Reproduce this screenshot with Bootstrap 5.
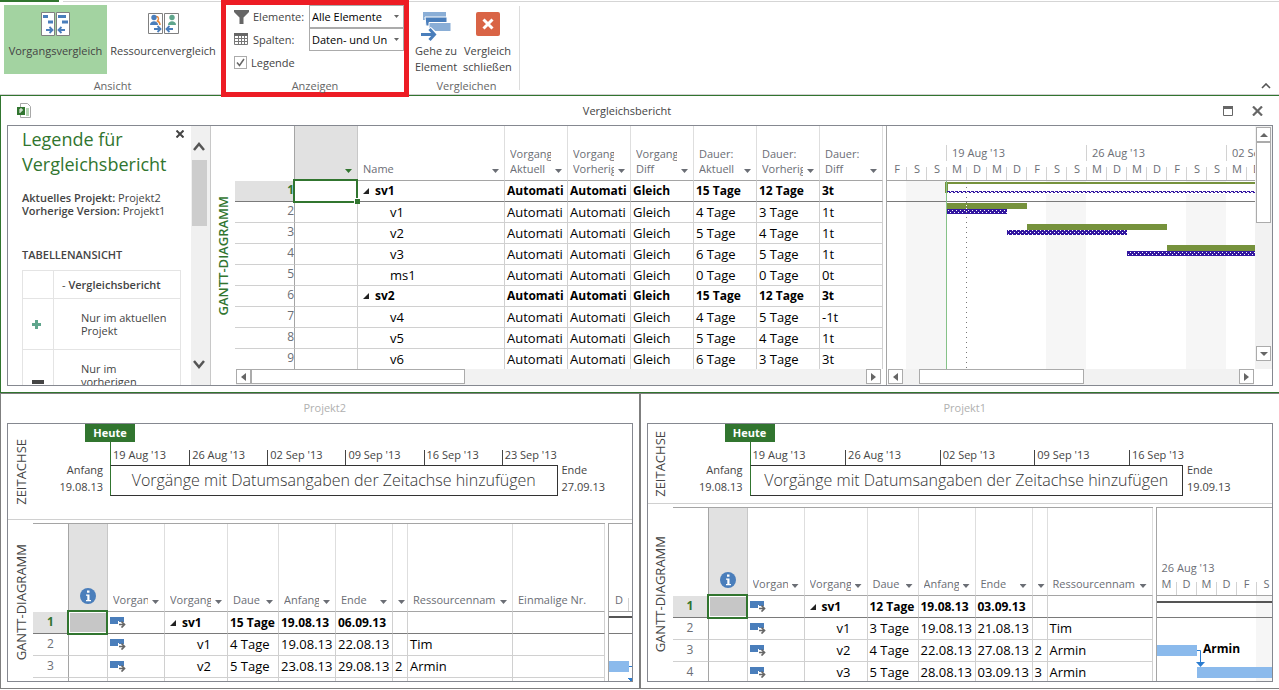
<!DOCTYPE html>
<html lang="de">
<head>
<meta charset="utf-8">
<meta name="viewport" content="width=device-width, initial-scale=1">
<title>Vergleichsbericht</title>
<link href="https://cdn.jsdelivr.net/npm/bootstrap@5.3.0/dist/css/bootstrap.min.css" rel="stylesheet">
<script src="https://cdn.jsdelivr.net/npm/bootstrap@5.3.0/dist/js/bootstrap.bundle.min.js" defer></script>
<style>
  :root { --pgreen: #31752f; --frame: #858890; --rule: #d0d0d0; --ink: #444; --muted: #6b6e75; }
  body { font-family: "Open Sans", "Noto Sans", sans-serif; font-size: 11px; line-height: 15px; color: var(--ink); background: #fff; }
  svg { display: block; flex: none; }
  button { font: inherit; color: inherit; background: none; border: 0; padding: 0; }
  .app { min-height: 100vh; height: 100vh; padding-bottom: 1px; }

  /* ribbon */
  .ribbon { height: 95px; border-bottom: 1px solid #d2d2d2; }
  .tabline { height: 2px; }
  .tab-file { width: 59px; background: var(--pgreen); }
  .tab-rule { height: 1px; margin-top: 1px; background: #d5d5d5; }
  .group-view { width: 221px; padding: 3px 0 0 4px; }
  .group-show { width: 188px; border: 5px solid #ed1c24; height: 97px; margin-top: -2px; z-index: 2; background: #fff; }
  .group-compare { width: 111px; padding: 3px 0 0 4px; }
  .group-compare::after { content: ""; position: absolute; right: 0; top: 4px; height: 84px; border-right: 1px solid #dcdcdc; }
  .caption { color: #666; }
  .rbtn { height: 69px; padding-top: 7px; display: flex; flex-direction: column; align-items: center; justify-content: flex-start; }
  .rbtn.active { background: #a3d3a1; }
  .rbtn span { display: block; line-height: 16px; margin-top: 7px; white-space: nowrap; text-align: center; }
  .show-row { height: 23px; }
  .combo { appearance: none; width: 95px; height: 23px; margin: 0; border: 1px solid #ababab; border-radius: 0; padding: 0 12px 0 2px; color: #000; font-size: 11px;
    background: #fff url("data:image/svg+xml,%3Csvg xmlns='http://www.w3.org/2000/svg' width='5' height='3'%3E%3Cpath d='M0 0h5L2.5 3z' fill='%23666'/%3E%3C/svg%3E") no-repeat right 4px center; }
  .tick { appearance: none; width: 13px; height: 13px; margin: 0; border: 1px solid #ababab;
    background: #fff url("data:image/svg+xml,%3Csvg xmlns='http://www.w3.org/2000/svg' width='11' height='11'%3E%3Cpath d='M2 5.5L4.5 8.5L9 2' fill='none' stroke='%23666' stroke-width='1.5'/%3E%3C/svg%3E") no-repeat center; }

  /* panes */
  .pane-report { flex: 1 1 0; min-height: 0; border: 1px solid var(--pgreen); border-right: 0; }
  .pane-pair { flex: 1 1 0; min-height: 0; }
  .pane { border: 1px solid #7f7f7f; min-width: 0; }
  .pane:last-child { border-right: 0; }
  .pane-title { height: 29px; padding-right: 4px; }
  .pane .pane-title { padding: 0 0 2px 10px; }
  .pane-title h2, .legend h2 { font-size: 11px; line-height: 15px; font-weight: 400; margin: 0; }
  .frame { border: 1px solid var(--frame); margin: 0 6px 6px; min-height: 0; overflow: hidden; }
  .side { width: 25px; }
  .side span { writing-mode: vertical-rl; transform: rotate(180deg); white-space: nowrap; font-size: 13px; line-height: 16px; }
  .side-main { width: 24px; color: var(--pgreen); }
  .side-main span { font-weight: 600; }

  /* legend */
  .legend { width: 183px; padding: 1px 10px 0 14px; overflow: hidden; }
  .legend h1 { font-size: 18px; line-height: 25px; font-weight: 400; color: var(--pgreen); margin: 0; }
  .legend .meta { line-height: 13px; margin: 14px 0 0; }
  .legend b { font-weight: 600; }
  .legend h2 { font-weight: 600; margin: 30px 0 8px; }
  .legend-close { top: 4px; right: 7px; }
  .legend-table { width: 159px; table-layout: fixed; border-collapse: collapse; line-height: 13px; }
  .legend-table td { border: 1px solid #e4e4e4; vertical-align: middle; padding: 12px 9px; }
  .legend-table td + td { padding-left: 27px; }
  .legend-table .lead-row td { padding: 7px 8px; }
  .vscroll-wide { width: 16px; background: #f0f0f0; padding: 16px 0; }
  .vthumb-wide { width: 15px; height: 66px; margin-top: 9px; background: #cdcdcd; }
  .legend-edge { width: 4px; background: #f0f0f0; border-right: 1px solid #c8c8c8; }

  /* data grids */
  .sheet { table-layout: fixed; border-collapse: separate; border-spacing: 0; color: #000; font-size: 13px; width: 1px; }
  .sheet th, .sheet td { padding: 0 0 0 2px; border-right: 1px solid var(--rule); border-bottom: 1px solid var(--rule); white-space: nowrap; overflow: hidden; line-height: 20px; height: 21px; }
  .sheet.tall td { line-height: 21px; height: 22px; }
  .sheet thead th { font-size: 11px; font-weight: 400; line-height: 15px; color: var(--muted); vertical-align: bottom; padding: 0 5px 4px; border-bottom-color: #a5a5a5; border-right-color: #dedede; }
  .sheet thead th.bare { border-color: transparent #a5a5a5 transparent transparent; }
  .sheet thead th.picked { background: #e1e1e1; border-right-color: #c8c8c8; }
  .sheet thead th.info { padding: 0 5px 7px 7px; }
  .sheet thead th.narrow { padding-left: 0; padding-right: 2px; }
  .sheet tbody th { font-weight: 400; font-size: 12px; color: var(--muted); border-right-color: #a5a5a5; padding: 0 0 2px; text-align: right; line-height: 18px; }
  .sheet.tall tbody th { text-align: center; height: 22px; }
  .sheet tbody .top td, .sheet tbody .top th { border-bottom-color: #7a7a7a; }
  .sheet tbody .top th { background: #e1e1e1; color: var(--pgreen); font-weight: 700; }
  .sheet .sum td { font-weight: 700; font-size: 12px; }
  .sheet td.cursor { position: relative; overflow: visible; padding: 0; }
  .sheet td.cursor::before { content: ""; position: absolute; inset: -2px -1px -2px -2px; border: 2px solid var(--pgreen); }
  .sheet td.grip::after { content: ""; position: absolute; right: -3px; bottom: -3px; width: 5px; height: 5px; background: var(--pgreen); border: 1px solid #fff; border-width: 1px 0 0 1px; box-sizing: content-box; }
  .sheet td.gray { background: #c6c6c6; box-shadow: inset 0 0 0 1px #fff; }
  .head-main { height: 55px; }
  .head-tall { height: 88px; }
  .sheet .lvl1 { padding-left: 32px; }
  .tri { display: inline-block; width: 0; height: 0; border-left: 6px solid transparent; border-bottom: 6px solid #222; margin: 0 6px 1px 3px; }
  .drop { width: 7px; height: 4px; flex: none; margin-bottom: 3px; background: currentColor; clip-path: polygon(0 0, 100% 0, 50% 100%); }
  .picked .drop { color: var(--pgreen); }
  .clip { overflow: hidden; margin-right: 4px; }
  .gap-edge { width: 4px; border-right: 1px solid #a5a5a5; flex: none; }

  /* scrollbars */
  .hbar { height: 16px; background: #f2f2f2; flex: none; margin: 0 2px 0 1px; }
  .hbar-chart { margin-right: 18px; }
  .sbtn, .sthumb { border: 1px solid #ababab; background: #fff; flex: none; }
  .sbtn { width: 15px; height: 15px; display: flex; align-items: center; justify-content: center; }
  .sthumb { height: 15px; }
  .vbar { width: 17px; background: #f2f2f2; padding: 1px 1px 8px; }

  /* gantt */
  .scale { border-bottom: 1px solid #a5a5a5; color: var(--muted); overflow: hidden; flex: none; }
  .weeks, .days { display: flex; white-space: nowrap; }
  .week { flex: 0 0 140px; border-left: 1px solid #d2d2d2; padding-left: 5px; height: 16px; }
  .day { flex: 0 0 20px; height: 19px; text-align: center; background: linear-gradient(#d2d2d2, #d2d2d2) no-repeat right bottom / 1px 13px; }

  /* timeline */
  .timeline { border-bottom: 1px solid var(--rule); flex: none; }
  .tl-date { color: var(--ink); line-height: 17px; padding-top: 37px; white-space: nowrap; }
  .tl-start { width: 77px; padding-right: 7px; }
  .today { width: 50px; height: 18px; margin-left: -25px; background: var(--pgreen); color: #fff; font-weight: 700; line-height: 18px; text-align: center; }
  .tl-weeks { height: 23px; display: flex; border-left: 1px solid var(--pgreen); white-space: nowrap; padding-top: 8px; }
  .tl-weeks span { flex: none; border-left: 1px solid #444; padding-left: 2px; line-height: 9px; }
  .tl-weeks span:first-child { border-left: 0; }
  .tl-box { height: 31px; border: 1px solid #333; border-left-color: var(--pgreen); font-size: 16px; font-weight: 300; line-height: 28px; text-align: center; white-space: nowrap; color: #333; }
</style>
</head>
<body>
<svg class="d-none" aria-hidden="true">
  <symbol id="task" viewBox="0 0 16 11"><path d="M0 0h14v7H0z" fill="#4a7ebb"/><path d="M8 4h8v7H8z" fill="#fff"/><path d="M9 3h5v2H9z" fill="#4a7ebb"/><path d="M9 7.500h5M11.500 4.500l3 3-3 3" fill="none" stroke="#666" stroke-width="1.700"/></symbol>
  <symbol id="info" viewBox="0 0 16 16"><circle cx="8" cy="8" r="8" fill="#4a7ebb"/><path d="M7 2.500h2.500v2.200H7zM6 6.500h3.500v5.500H11v1.300H6V12h1.300V7.800H6z" fill="#fff"/></symbol>
  <symbol id="al" viewBox="0 0 5 8"><path d="M5 0v8L0 4z" fill="#666"/></symbol>
  <symbol id="ar" viewBox="0 0 5 8"><path d="M0 0v8l5-4z" fill="#666"/></symbol>
</svg>

<div class="app d-flex flex-column overflow-hidden">
  <header class="ribbon flex-shrink-0">
    <div class="tabline d-flex"><div class="tab-file"></div><div class="ms-1 flex-grow-1 tab-rule"></div></div>
    <div class="d-flex">
      <section class="group-view">
        <div class="d-flex">
          <button class="rbtn active" type="button" style="width:103px">
            <svg width="29" height="24"><path d="M.5.500h13v23H.5zM15.500.500h13v23h-13z" fill="#fff" stroke="#808080"/><path d="M2 3h5v3H2zM7 8.500h5v3H7zM17 3h8v3h-8zM21 8.500h6v3h-6z" fill="#4a7ebb"/><path d="M5 18h6M8.500 15l3 3-3 3M24 18h-6M20.500 15l-3 3 3 3" fill="none" stroke="#4a7ebb" stroke-width="1.800"/></svg>
            <span>Vorgangsvergleich</span>
          </button>
          <button class="rbtn" type="button" style="width:112px">
            <svg width="31" height="24" viewBox="0 -1 31 24"><path d="M.5.500h14v20H.5zM16.500.500h14v20h-14z" fill="#fff" stroke="#808080"/><path d="M8 3.500c3 0 3 3 1.500 4.500 2 1 2.500 2 2.500 4" fill="none" stroke="#e8883a" stroke-width="1.500"/><circle cx="6" cy="4.500" r="2.700" fill="#4a7ebb"/><path d="M2 12c0-5 8-5 8 0z" fill="#4a7ebb"/><circle cx="24" cy="4.500" r="2.700" fill="#5fa58c"/><path d="M20 12c0-5 8-5 8 0z" fill="#5fa58c"/><path d="M6 16h6M9.500 13l3 3-3 3M25 16h-6M21.500 13l-3 3 3 3" fill="none" stroke="#4a7ebb" stroke-width="1.800"/></svg>
            <span>Ressourcenvergleich</span>
          </button>
        </div>
        <div class="caption text-center mt-1">Ansicht</div>
      </section>
      <section class="group-show position-relative">
        <div class="show-row d-flex align-items-center ps-2">
          <svg width="15" height="14"><path d="M0 0h15v2L9.500 7.500V14h-4V7.500L0 2z" fill="#666"/></svg>
          <label class="ps-1 flex-grow-1" for="cb-el">Elemente:</label>
          <select id="cb-el" class="combo"><option>Alle Elemente</option></select>
        </div>
        <div class="show-row d-flex align-items-center ps-2">
          <svg width="15" height="13"><path d="M.5.500h13v11H.5zM.5 5.500h13M.5 8.500h13M4.500 3v8.500M7.500 3v8.500M10.500 3v8.500" fill="none" stroke="#777"/><path d="M0 0h14v3H0z" fill="#666"/></svg>
          <label class="ps-1 flex-grow-1" for="cb-sp">Spalten:</label>
          <select id="cb-sp" class="combo"><option>Daten- und Un</option></select>
        </div>
        <div class="show-row d-flex align-items-center ps-2">
          <input class="tick" type="checkbox" id="ck-leg" checked>
          <label class="ps-1" for="ck-leg">Legende</label>
        </div>
        <div class="caption text-center mt-1">Anzeigen</div>
      </section>
      <section class="group-compare position-relative">
        <div class="d-flex">
          <button class="rbtn" type="button" style="width:46px">
            <svg width="30" height="31"><path d="M2 0h23v8H2z" fill="#8aaed6"/><path d="M4 5h22v9H5z" fill="#4a7ebb" stroke="#fff"/><path d="M8 10.500h22v9H8z" fill="#8aaed6" stroke="#fff"/><path d="M-1 22.500h14M8 16.500l6.500 6-6.500 6" fill="none" stroke="#fff" stroke-width="5"/><path d="M0 22.500h12M8.500 17l5 5.500-5 5.500" fill="none" stroke="#4a7ebb" stroke-width="3"/></svg>
            <span class="mt-0">Gehe zu<br>Element</span>
          </button>
          <button class="rbtn" type="button" style="width:57px">
            <svg width="24" height="31"><rect width="24" height="24" rx="2" fill="#d96446"/><path d="M7.500 7.500l9 9M16.500 7.500l-9 9" stroke="#fff" stroke-width="3"/></svg>
            <span class="mt-0">Vergleich<br>schließen</span>
          </button>
        </div>
        <div class="caption text-center mt-1">Vergleichen</div>
      </section>
      <button class="ms-auto align-self-end mb-2 me-2" type="button" aria-label="Menüband reduzieren"><svg width="10" height="6"><path d="M1 5l4-4 4 4" fill="none" stroke="#555" stroke-width="1.600"/></svg></button>
    </div>
  </header>

  <main class="pane-report d-flex flex-column">
    <div class="pane-title d-flex align-items-center flex-shrink-0">
      <svg class="ms-3" width="14" height="15"><path d="M3.500 4V.500h7l3 3v11h-10V12" fill="#fff" stroke="#a8a8a8"/><path d="M0 4h8v8H0z" fill="#31752f"/><path d="M3 10V6h2v2H3" fill="none" stroke="#fff"/><path d="M9 6h3M9 8h3M9 10h3M9 12h3" stroke="#6cae6a"/></svg>
      <h2 class="flex-grow-1 text-center">Vergleichsbericht</h2>
      <button type="button" class="me-3" aria-label="Maximieren"><svg width="13" height="10"><path d="M.5.500h9v9H.5z" fill="none" stroke="#666"/><path d="M0 0h10v3H0z" fill="#666"/></svg></button>
      <button type="button" class="me-2" aria-label="Schließen"><svg width="15" height="10"><path d="M1 .500l9 9M10 .500l-9 9" stroke="#666" stroke-width="2.200"/></svg></button>
    </div>
    <div class="frame d-flex flex-grow-1">
      <aside class="legend position-relative flex-shrink-0">
        <button type="button" class="legend-close position-absolute" aria-label="Legende schließen"><svg width="8" height="8"><path d="M.5.500l7 7M7.500.500l-7 7" stroke="#444" stroke-width="2"/></svg></button>
        <h1>Legende für<br>Vergleichsbericht</h1>
        <p class="meta text-nowrap"><b>Aktuelles Projekt:</b> Projekt2<br><b>Vorherige Version:</b> Projekt1</p>
        <h2>TABELLENANSICHT</h2>
        <table class="legend-table">
          <colgroup><col style="width:31px"><col></colgroup>
          <tr class="lead-row"><td></td><td class="text-nowrap ps-2">- <b>Vergleichsbericht</b></td></tr>
          <tr><td><svg width="9" height="9"><path d="M3 0h3v3h3v3H6v3H3V6H0V3h3z" fill="#5fa58c"/></svg></td><td class="pe-0 text-nowrap">Nur im aktuellen<br>Projekt</td></tr>
          <tr><td><svg width="12" height="4"><path d="M0 0h12v4H0z" fill="#444"/></svg></td><td>Nur im vorherigen Projekt</td></tr>
        </table>
      </aside>
      <div class="vscroll-wide d-flex flex-column align-items-center flex-shrink-0">
        <svg width="12" height="9"><path d="M1 8l5-6 5 6" fill="none" stroke="#555" stroke-width="2.500"/></svg>
        <div class="vthumb-wide"></div>
        <svg class="mt-auto" width="12" height="9"><path d="M1 1l5 6 5-6" fill="none" stroke="#555" stroke-width="2.500"/></svg>
      </div>
      <div class="legend-edge flex-shrink-0"></div>
      <div class="side side-main d-flex align-items-center justify-content-center flex-shrink-0"><span>GANTT-DIAGRAMM</span></div>

      <div class="d-flex flex-column flex-shrink-0">
        <div class="flex-grow-1 overflow-hidden" style="min-height:0">
          <table class="sheet">
            <colgroup><col style="width:60px"><col style="width:63px"><col style="width:147px"><col style="width:63px"><col style="width:63px"><col style="width:63px"><col style="width:63px"><col style="width:63px"><col style="width:63px"></colgroup>
            <thead><tr class="head-main">
              <th class="bare"></th>
              <th class="picked"><div class="d-flex justify-content-end"><i class="drop"></i></div></th>
              <th><div class="d-flex align-items-end justify-content-between"><span class="clip">Name</span><i class="drop"></i></div></th>
              <th><div class="d-flex align-items-end justify-content-between"><span class="clip">Vorgang<br>Aktuell</span><i class="drop"></i></div></th>
              <th><div class="d-flex align-items-end justify-content-between"><span class="clip">Vorgang<br>Vorherig</span><i class="drop"></i></div></th>
              <th><div class="d-flex align-items-end justify-content-between"><span class="clip">Vorgang<br>Diff</span><i class="drop"></i></div></th>
              <th><div class="d-flex align-items-end justify-content-between"><span class="clip">Dauer:<br>Aktuell</span><i class="drop"></i></div></th>
              <th><div class="d-flex align-items-end justify-content-between"><span class="clip">Dauer:<br>Vorherig</span><i class="drop"></i></div></th>
              <th><div class="d-flex align-items-end justify-content-between"><span class="clip">Dauer:<br>Diff</span><i class="drop"></i></div></th>
            </tr></thead>
            <tbody>
              <tr class="top sum"><th>1</th><td class="cursor grip"></td><td><i class="tri"></i>sv1</td><td>Automati</td><td>Automati</td><td>Gleich</td><td>15 Tage</td><td>12 Tage</td><td>3t</td></tr>
              <tr><th>2</th><td></td><td class="lvl1">v1</td><td>Automati</td><td>Automati</td><td>Gleich</td><td>4 Tage</td><td>3 Tage</td><td>1t</td></tr>
              <tr><th>3</th><td></td><td class="lvl1">v2</td><td>Automati</td><td>Automati</td><td>Gleich</td><td>5 Tage</td><td>4 Tage</td><td>1t</td></tr>
              <tr><th>4</th><td></td><td class="lvl1">v3</td><td>Automati</td><td>Automati</td><td>Gleich</td><td>6 Tage</td><td>5 Tage</td><td>1t</td></tr>
              <tr><th>5</th><td></td><td class="lvl1">ms1</td><td>Automati</td><td>Automati</td><td>Gleich</td><td>0 Tage</td><td>0 Tage</td><td>0t</td></tr>
              <tr class="sum"><th>6</th><td></td><td><i class="tri"></i>sv2</td><td>Automati</td><td>Automati</td><td>Gleich</td><td>15 Tage</td><td>12 Tage</td><td>3t</td></tr>
              <tr><th>7</th><td></td><td class="lvl1">v4</td><td>Automati</td><td>Automati</td><td>Gleich</td><td>4 Tage</td><td>5 Tage</td><td>-1t</td></tr>
              <tr><th>8</th><td></td><td class="lvl1">v5</td><td>Automati</td><td>Automati</td><td>Gleich</td><td>5 Tage</td><td>4 Tage</td><td>1t</td></tr>
              <tr><th>9</th><td></td><td class="lvl1">v6</td><td>Automati</td><td>Automati</td><td>Gleich</td><td>6 Tage</td><td>3 Tage</td><td>3t</td></tr>
            </tbody>
          </table>
        </div>
        <div class="hbar d-flex"><div class="sbtn"><svg width="5" height="8"><use href="#al"/></svg></div><div class="sthumb" style="width:214px"></div><div class="sbtn ms-auto"><svg width="5" height="8"><use href="#ar"/></svg></div></div>
      </div>
      <div class="gap-edge"></div>
      <div class="d-flex flex-column flex-grow-1" style="min-width:0">
        <div class="d-flex flex-grow-1" style="min-height:0">
          <div class="d-flex flex-column flex-grow-1 overflow-hidden" style="min-width:0">
            <div class="scale head-main d-flex flex-column justify-content-end">
              <div class="weeks"><div style="flex:0 0 59px"></div><div class="week">19 Aug '13</div><div class="week">26 Aug '13</div><div class="week">02 Sep '13</div></div>
              <div class="days"><div class="day">F</div><div class="day">S</div><div class="day">S</div><div class="day">M</div><div class="day">D</div><div class="day">M</div><div class="day">D</div><div class="day">F</div><div class="day">S</div><div class="day">S</div><div class="day">M</div><div class="day">D</div><div class="day">M</div><div class="day">D</div><div class="day">F</div><div class="day">S</div><div class="day">S</div><div class="day">M</div><div class="day">D</div></div>
            </div>
            <svg class="w-100" height="190" shape-rendering="crispEdges">
              <defs><pattern id="dots" width="4" height="4" patternUnits="userSpaceOnUse"><path d="M0 0h4v4H0z" fill="#3317a0"/><path d="M1 1h1v1H1zM3 3h1v1H3z" fill="#fff"/></pattern>
              <pattern id="wave" width="4" height="2" patternUnits="userSpaceOnUse"><path d="M0 0h3v1H0zM2 1h2v1H2z" fill="#3317a0"/></pattern></defs>
              <path d="M19 0h40v190H19zM159 0h40v190h-40zM299 0h40v190h-40z" fill="#f6f6f6"/>
              <path d="M60 1h900v12H60z" fill="#fff"/>
              <path d="M0 20h1200v1H0z" fill="#7a7a7a"/>
              <path d="M58 1h1200v2H61v9h-3z" fill="#76923c"/>
              <path d="M60 10h1200v2H60z" fill="url(#wave)"/>
              <path d="M60 22h80v6H60zM140 43h140v6H140zM280 64h900v6H280z" fill="#76923c"/>
              <path d="M60 28h60v5H60zM120 49h120v5H120zM240 70h900v5H240z" fill="url(#dots)"/>
              <path d="M59.500 0v190" stroke="#86c288"/>
              <path d="M79.500 0v34" stroke="#fff" stroke-dasharray="1 2"/>
              <path d="M79.500 1v190" stroke="#777" stroke-dasharray="1 4"/>
            </svg>
          </div>
          <div class="vbar d-flex flex-column flex-shrink-0">
            <div class="sbtn"><svg width="8" height="4"><path d="M0 4h8L4 0z" fill="#666"/></svg></div>
            <div class="sthumb" style="width:15px;height:81px"></div>
            <div class="sbtn mt-auto"><svg width="8" height="4"><path d="M0 0h8L4 4z" fill="#666"/></svg></div>
          </div>
        </div>
        <div class="hbar hbar-chart d-flex"><div class="sbtn"><svg width="5" height="8"><use href="#al"/></svg></div><div class="sthumb ms-3" style="width:165px"></div><div class="sbtn ms-auto"><svg width="5" height="8"><use href="#ar"/></svg></div></div>
      </div>
    </div>
  </main>

  <div class="pane-pair d-flex">
    <section class="pane d-flex flex-column w-50">
      <div class="pane-title d-flex align-items-center justify-content-center flex-shrink-0"><h2 style="color:#b0b0b0">Projekt2</h2></div>
      <div class="frame d-flex flex-column flex-grow-1">
        <div class="timeline d-flex" style="height:96px">
          <div class="side d-flex align-items-center justify-content-center flex-shrink-0"><span>ZEITACHSE</span></div>
          <div class="tl-date tl-start text-end flex-shrink-0">Anfang<br>19.08.13</div>
          <div class="flex-grow-1" style="min-width:0">
            <div class="today">Heute</div>
            <div class="tl-weeks"><span style="width:17.5%">19 Aug '13</span><span style="width:17.5%">26 Aug '13</span><span style="width:17.5%">02 Sep '13</span><span style="width:17.5%">09 Sep '13</span><span style="width:17.5%">16 Sep '13</span><span>23 Sep '13</span></div>
            <div class="tl-box">Vorgänge mit Datumsangaben der Zeitachse hinzufügen</div>
          </div>
          <div class="tl-date ps-1 flex-shrink-0" style="width:74px">Ende<br>27.09.13</div>
        </div>
        <div class="d-flex flex-grow-1 overflow-hidden" style="margin-top:3px">
          <div class="side d-flex align-items-center justify-content-center flex-shrink-0"><span>GANTT-DIAGRAMM</span></div>
          <div class="flex-shrink-0 border-top" style="--bs-border-color:#a5a5a5">
            <table class="sheet tall">
              <colgroup><col style="width:36px"><col style="width:39px"><col style="width:57px"><col style="width:63px"><col style="width:51px"><col style="width:57px"><col style="width:57px"><col style="width:15px"><col style="width:105px"><col style="width:92px"></colgroup>
              <thead><tr class="head-tall">
                <th class="bare"></th>
                <th class="picked info"><svg class="ms-1" width="16" height="16"><use href="#info"/></svg></th>
                <th><div class="d-flex align-items-end justify-content-between"><span class="clip">Vorgang</span><i class="drop"></i></div></th>
                <th><div class="d-flex align-items-end justify-content-between"><span class="clip">Vorgang</span><i class="drop"></i></div></th>
                <th><div class="d-flex align-items-end justify-content-between"><span class="clip">Daue</span><i class="drop"></i></div></th>
                <th><div class="d-flex align-items-end justify-content-between"><span class="clip">Anfang</span><i class="drop"></i></div></th>
                <th><div class="d-flex align-items-end justify-content-between"><span class="clip">Ende</span><i class="drop"></i></div></th>
                <th class="narrow"><div class="d-flex justify-content-end"><i class="drop"></i></div></th>
                <th><div class="d-flex align-items-end justify-content-between"><span class="clip">Ressourcennam</span><i class="drop"></i></div></th>
                <th>Einmalige Nr.</th>
              </tr></thead>
              <tbody>
                <tr class="top sum"><th>1</th><td class="cursor gray"></td><td><svg width="16" height="11"><use href="#task"/></svg></td><td><i class="tri"></i>sv1</td><td>15 Tage</td><td>19.08.13</td><td>06.09.13</td><td></td><td></td><td></td></tr>
                <tr><th>2</th><td></td><td><svg width="16" height="11"><use href="#task"/></svg></td><td class="lvl1">v1</td><td>4 Tage</td><td>19.08.13</td><td>22.08.13</td><td></td><td>Tim</td><td></td></tr>
                <tr><th>3</th><td></td><td><svg width="16" height="11"><use href="#task"/></svg></td><td class="lvl1">v2</td><td>5 Tage</td><td>23.08.13</td><td>29.08.13</td><td>2</td><td>Armin</td><td></td></tr>
                <tr><th></th><td></td><td></td><td></td><td></td><td></td><td></td><td></td><td></td><td></td></tr>
              </tbody>
            </table>
          </div>
          <div class="gap-edge"></div>
          <div class="flex-grow-1 overflow-hidden border-top" style="--bs-border-color:#a5a5a5;min-width:0">
            <div class="scale head-tall d-flex flex-column justify-content-end"><div class="days"><div class="day">D</div><div class="day"></div></div></div>
            <svg class="w-100" height="70" shape-rendering="crispEdges"><path d="M0 4h200v2H0z" fill="#555"/><path d="M0 21h200v1H0z" fill="#7a7a7a"/><path d="M0 49h20v11H0z" fill="#8bbaec"/><path d="M20 54.500h3v14" fill="none" stroke="#2b7cd0"/><path d="M18 66h8l-4 4z" fill="#2b7cd0"/></svg>
          </div>
        </div>
      </div>
    </section>

    <section class="pane d-flex flex-column w-50">
      <div class="pane-title d-flex align-items-center justify-content-center flex-shrink-0"><h2 style="color:#b0b0b0">Projekt1</h2></div>
      <div class="frame d-flex flex-column flex-grow-1">
        <div class="timeline d-flex" style="height:80px">
          <div class="side d-flex align-items-center justify-content-center flex-shrink-0"><span>ZEITACHSE</span></div>
          <div class="tl-date tl-start text-end flex-shrink-0">Anfang<br>19.08.13</div>
          <div class="flex-grow-1" style="min-width:0">
            <div class="today">Heute</div>
            <div class="tl-weeks"><span style="width:21.875%">19 Aug '13</span><span style="width:21.875%">26 Aug '13</span><span style="width:21.875%">02 Sep '13</span><span style="width:21.875%">09 Sep '13</span><span>16 Sep '13</span></div>
            <div class="tl-box">Vorgänge mit Datumsangaben der Zeitachse hinzufügen</div>
          </div>
          <div class="tl-date ps-1 flex-shrink-0" style="width:89px">Ende<br>19.09.13</div>
        </div>
        <div class="d-flex flex-grow-1 overflow-hidden" style="margin-top:3px">
          <div class="side d-flex align-items-center justify-content-center flex-shrink-0"><span>GANTT-DIAGRAMM</span></div>
          <div class="flex-shrink-0 border-top" style="--bs-border-color:#a5a5a5">
            <table class="sheet tall">
              <colgroup><col style="width:36px"><col style="width:39px"><col style="width:57px"><col style="width:63px"><col style="width:51px"><col style="width:57px"><col style="width:57px"><col style="width:15px"><col style="width:105px"></colgroup>
              <thead><tr class="head-tall">
                <th class="bare"></th>
                <th class="picked info"><svg class="ms-1" width="16" height="16"><use href="#info"/></svg></th>
                <th><div class="d-flex align-items-end justify-content-between"><span class="clip">Vorgang</span><i class="drop"></i></div></th>
                <th><div class="d-flex align-items-end justify-content-between"><span class="clip">Vorgang</span><i class="drop"></i></div></th>
                <th><div class="d-flex align-items-end justify-content-between"><span class="clip">Daue</span><i class="drop"></i></div></th>
                <th><div class="d-flex align-items-end justify-content-between"><span class="clip">Anfang</span><i class="drop"></i></div></th>
                <th><div class="d-flex align-items-end justify-content-between"><span class="clip">Ende</span><i class="drop"></i></div></th>
                <th class="narrow"><div class="d-flex justify-content-end"><i class="drop"></i></div></th>
                <th><div class="d-flex align-items-end justify-content-between"><span class="clip">Ressourcennam</span><i class="drop"></i></div></th>
              </tr></thead>
              <tbody>
                <tr class="top sum"><th>1</th><td class="cursor gray"></td><td><svg width="16" height="11"><use href="#task"/></svg></td><td><i class="tri"></i>sv1</td><td>12 Tage</td><td>19.08.13</td><td>03.09.13</td><td></td><td></td></tr>
                <tr><th>2</th><td></td><td><svg width="16" height="11"><use href="#task"/></svg></td><td class="lvl1">v1</td><td>3 Tage</td><td>19.08.13</td><td>21.08.13</td><td></td><td>Tim</td></tr>
                <tr><th>3</th><td></td><td><svg width="16" height="11"><use href="#task"/></svg></td><td class="lvl1">v2</td><td>4 Tage</td><td>22.08.13</td><td>27.08.13</td><td>2</td><td>Armin</td></tr>
                <tr><th>4</th><td></td><td><svg width="16" height="11"><use href="#task"/></svg></td><td class="lvl1">v3</td><td>5 Tage</td><td>28.08.13</td><td>03.09.13</td><td>3</td><td>Armin</td></tr>
              </tbody>
            </table>
          </div>
          <div class="gap-edge"></div>
          <div class="flex-grow-1 overflow-hidden border-top" style="--bs-border-color:#a5a5a5;min-width:0">
            <div class="scale head-tall d-flex flex-column justify-content-end">
              <div class="weeks"><div class="week border-0">26 Aug '13</div></div>
              <div class="days"><div class="day">M</div><div class="day">D</div><div class="day">M</div><div class="day">D</div><div class="day">F</div><div class="day">S</div></div>
            </div>
            <svg class="w-100" height="90"><path d="M99 0h40v90H99z" fill="#f6f6f6"/><path d="M0 5h300v2H0z" fill="#555"/><path d="M0 21h300v1H0z" fill="#7a7a7a"/><path d="M0 49h40v11H0zM40 71h200v11H40z" fill="#8bbaec"/><path d="M40 54.500h3.500V67" fill="none" stroke="#2b7cd0"/><path d="M39 66h9l-4.500 5z" fill="#2b7cd0"/><text x="46" y="57" font-size="12" font-weight="700" fill="#000">Armin</text></svg>
          </div>
        </div>
      </div>
    </section>
  </div>
</div>
</body>
</html>
